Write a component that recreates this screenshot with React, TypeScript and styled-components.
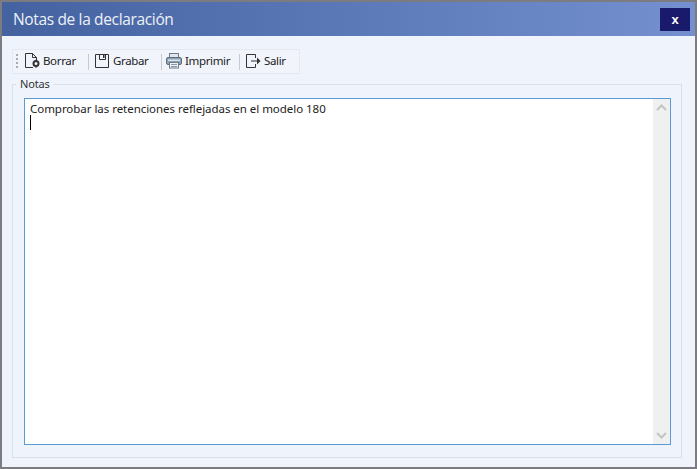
import React from "react";
import styled, { createGlobalStyle } from "styled-components";

const GlobalStyle = createGlobalStyle`
  html, body {
    margin: 0;
    padding: 0;
    background: #eff3fc;
  }
`;

// Outer dialog frame
const Dialog = styled.div`
  box-sizing: border-box;
  width: 697px;
  height: 469px;
  display: flex;
  flex-direction: column;
  border: 2px solid #7b7b80;
  background: #eff3fc;
  font-family: "Noto Sans", "Open Sans", sans-serif;
  color: #222;
`;

const TitleBar = styled.div`
  flex: 0 0 34px;
  display: flex;
  align-items: center;
  justify-content: space-between;
  padding: 0 5px 0 11px;
  background: linear-gradient(90deg, #43629f 0%, #7490cf 100%);
`;

const Title = styled.div`
  color: #edf1f8;
  font-family: "Open Sans", sans-serif;
  font-size: 15.5px;
  letter-spacing: -0.35px;
  line-height: 34px;
`;

const CloseButton = styled.button`
  width: 30px;
  height: 23px;
  padding: 0;
  border: none;
  background: #1a1a6c;
  color: #fff;
  font-family: "Liberation Sans", sans-serif;
  font-size: 13px;
  font-weight: 700;
  line-height: 21px;
`;

const Body = styled.div`
  flex: 1;
  display: flex;
  flex-direction: column;
  padding: 13px 12px 9px 10px;
  min-height: 0;
`;

const Toolbar = styled.div`
  box-sizing: border-box;
  width: 288px;
  height: 25px;
  display: flex;
  align-items: center;
  padding-left: 3px;
  border: 1px solid #e4e8f2;
  background: #f1f4fb;
`;

const Grip = styled.div`
  width: 2px;
  height: 15px;
  margin-right: 6px;
  background-image: linear-gradient(#a9abb0 50%, transparent 50%);
  background-size: 2px 4px;
`;

const ToolButton = styled.div<{ $width: number }>`
  width: ${(props) => props.$width}px;
  display: flex;
  align-items: center;
  gap: 2px;
  font-size: 11.5px;
  letter-spacing: -0.35px;
  line-height: 16px;
`;

const ToolLabel = styled.span`
  margin-top: -1px;
`;

const Separator = styled.div`
  width: 1px;
  height: 16px;
  margin-right: 4px;
  background: #c5c9d2;
`;

const GroupBox = styled.fieldset`
  flex: 1;
  min-height: 0;
  width: 670px;
  box-sizing: border-box;
  margin: 2px 0 0;
  padding: 0 10px 12px 11px;
  border: 1px solid #dcdfe5;
  display: flex;
`;

const Legend = styled.legend`
  margin-left: -8px;
  padding: 0 4px 2px;
  font-size: 11px;
  letter-spacing: -0.15px;
  line-height: 15px;
  color: #333;
`;

const NoteArea = styled.div`
  flex: 1;
  display: flex;
  margin-top: 5px;
  border: 1px solid #5b9bd5;
  background: #fff;
`;

const NoteText = styled.div`
  flex: 1;
  padding: 2px 5px;
  font-size: 11.5px;
  letter-spacing: -0.04px;
  line-height: 15px;
`;

const Caret = styled.div`
  width: 1px;
  height: 15px;
  margin-top: -1px;
  background: #000;
`;

const ScrollBar = styled.div`
  width: 17px;
  display: flex;
  flex-direction: column;
  justify-content: space-between;
  align-items: center;
  padding: 5px 0;
  background: #f0f0f0;
`;

const iconProps = {
  fill: "none",
  stroke: "#333",
  strokeWidth: 1,
};

const BorrarIcon = () => (
  <svg width="17" height="17" viewBox="0 0 17 17" {...iconProps}>
    <path d="M9 14.5h-7.5v-14h7l4 4v3M8.5 .5v4h4" />
    <circle cx="12" cy="10.5" r="2.5" strokeWidth="2" />
    <path d="M12 6.5v2M12 12.5v2.5" />
  </svg>
);

const GrabarIcon = () => (
  <svg width="18" height="17" viewBox="0 0 18 17" {...iconProps}>
    <path d="M2.5 1.5h13v13h-13z" />
    <path d="M6.5 1.5v5h6v-5" />
    <path d="M10 2v3h1.5v-3z" fill="#333" stroke="none" />
  </svg>
);

const ImprimirIcon = () => (
  <svg width="17" height="17" viewBox="0 0 17 17" fill="none">
    <rect x="3.5" y="0.5" width="9" height="5" fill="#dfe6ee" stroke="#6d7c8c" />
    <rect x="0.5" y="4.5" width="15" height="7" rx="1.5" fill="#8ea2b5" stroke="#5f6e7c" />
    <rect x="2" y="6.5" width="12" height="1.5" fill="#dbe4ec" />
    <rect x="3.5" y="9.5" width="9" height="5.5" fill="#eef2f6" stroke="#6d7c8c" />
    <path d="M5 11.5h6M5 13.5h6" stroke="#8b98a5" />
  </svg>
);

const SalirIcon = () => (
  <svg width="18" height="17" viewBox="0 0 18 17" {...iconProps}>
    <path d="M11.5 5v-3.5h-9v13h9v-3.5" />
    <path d="M7 8h7" />
    <path d="M13 4.5l3.5 3.5-3.5 3.5z" fill="#333" stroke="none" />
  </svg>
);

const Chevron = ({ down }: { down?: boolean }) => (
  <svg width="11" height="7" viewBox="0 0 11 7" fill="none" stroke="#c4c4c4" strokeWidth="2">
    <path d={down ? "M1 1l4.5 4.5L10 1" : "M1 6l4.5-4.5L10 6"} />
  </svg>
);

export default function App() {
  return (
    <>
      <GlobalStyle />
      <Dialog>
        <TitleBar>
          <Title>Notas de la declaración</Title>
          <CloseButton>x</CloseButton>
        </TitleBar>
        <Body>
          <Toolbar>
            <Grip />
            <ToolButton $width={64}>
              <BorrarIcon />
              <ToolLabel>Borrar</ToolLabel>
            </ToolButton>
            <Separator />
            <ToolButton $width={68}>
              <GrabarIcon />
              <ToolLabel>Grabar</ToolLabel>
            </ToolButton>
            <Separator />
            <ToolButton $width={73}>
              <ImprimirIcon />
              <ToolLabel>Imprimir</ToolLabel>
            </ToolButton>
            <Separator />
            <ToolButton $width={50}>
              <SalirIcon />
              <ToolLabel>Salir</ToolLabel>
            </ToolButton>
          </Toolbar>
          <GroupBox>
            <Legend>Notas</Legend>
            <NoteArea>
              <NoteText>
                Comprobar las retenciones reflejadas en el modelo 180
                <Caret />
              </NoteText>
              <ScrollBar>
                <Chevron />
                <Chevron down />
              </ScrollBar>
            </NoteArea>
          </GroupBox>
        </Body>
      </Dialog>
    </>
  );
}
